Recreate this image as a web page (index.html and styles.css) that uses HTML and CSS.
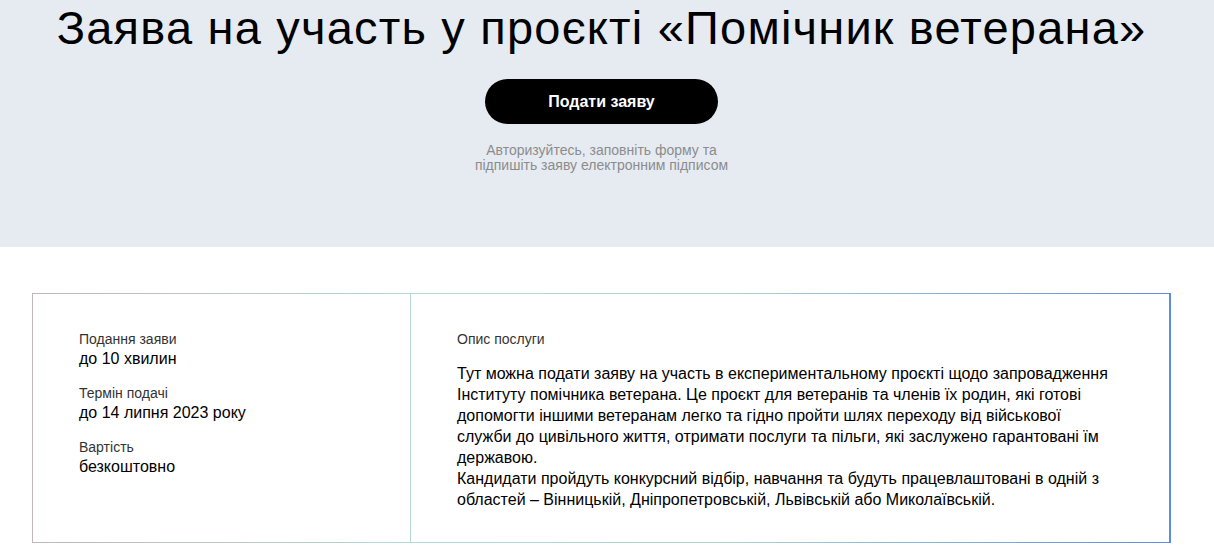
FILE: index.html
```html
<!DOCTYPE html>
<html lang="uk">
<head>
<meta charset="utf-8">
<title>Заява на участь у проєкті «Помічник ветерана»</title>
<link rel="stylesheet" href="styles.css">
</head>
<body>
<section class="hero">
  <h1 class="hero-title">Заява на участь у проєкті «Помічник ветерана»</h1>
  <a class="btn-primary" href="#">Подати заяву</a>
  <p class="hero-note">Авторизуйтесь, заповніть форму та<br>підпишіть заяву електронним підписом</p>
</section>
<section class="content">
  <div class="card">
    <div class="card-side">
      <div class="fact">
        <div class="fact-label">Подання заяви</div>
        <div class="fact-value">до 10 хвилин</div>
      </div>
      <div class="fact">
        <div class="fact-label">Термін подачі</div>
        <div class="fact-value">до 14 липня 2023 року</div>
      </div>
      <div class="fact">
        <div class="fact-label">Вартість</div>
        <div class="fact-value">безкоштовно</div>
      </div>
    </div>
    <div class="card-main">
      <div class="fact-label">Опис послуги</div>
      <p class="desc">Тут можна подати заяву на участь в експериментальному проєкті щодо запровадження Інституту помічника ветерана. Це проєкт для ветеранів та членів їх родин, які готові допомогти іншими ветеранам легко та гідно пройти шлях переходу від військової служби до цивільного життя, отримати послуги та пільги, які заслужено гарантовані їм державою.<br>Кандидати пройдуть конкурсний відбір, навчання та будуть працевлаштовані в одній з областей – Вінницькій, Дніпропетровській, Львівській або Миколаївській.</p>
    </div>
  </div>
</section>
</body>
</html>
```
FILE: styles.css
```css
* { box-sizing: border-box; }
html, body { margin: 0; padding: 0; }
body {
  font-family: "Liberation Sans", Arial, sans-serif;
  color: #000;
  background: #fff;
}
.hero {
  background: #e6ebf2;
  height: 247px;
  padding: 0 11px 0 0;
  display: flex;
  flex-direction: column;
  align-items: center;
}
.hero-title {
  margin: 0;
  font-weight: 400;
  font-size: 47px;
  letter-spacing: 1.2px;
  line-height: 56px;
  color: #000;
  white-space: nowrap;
}
.btn-primary {
  margin-top: 23px;
  width: 233px;
  height: 45px;
  border-radius: 23px;
  background: #000;
  color: #fff;
  text-decoration: none;
  font-weight: 700;
  font-size: 16px;
  display: flex;
  align-items: center;
  justify-content: center;
}
.hero-note {
  margin: 19px 0 0;
  text-align: center;
  color: #8c8c8c;
  font-size: 14px;
  line-height: 15px;
}
.content {
  padding: 46px 43px 20px 32px;
}
.card {
  display: flex;
  height: 250px;
  border-style: solid;
  border-width: 1px 2px 1px 1px;
  border-image: linear-gradient(90deg, #c3b5bb 0%, #b4d9d2 33%, #acd6d0 60%, #5a8de2 100%) 1;
}
.card-side {
  width: 378px;
  flex: none;
  padding: 37px 20px 0 46px;
  border-right: 1px solid #b4d8d1;
  display: flex;
  flex-direction: column;
  gap: 18px;
}
.fact { display: flex; flex-direction: column; gap: 4px; }
.fact-label {
  font-size: 14px;
  line-height: 16px;
  color: #333;
}
.fact-value {
  font-size: 16px;
  line-height: 16px;
  color: #000;
}
.card-main {
  flex: 1;
  padding: 37px 40px 0 46px;
}
.desc {
  margin: 16px 0 0;
  max-width: 656px;
  font-size: 16px;
  line-height: 21px;
  color: #000;
}
```
